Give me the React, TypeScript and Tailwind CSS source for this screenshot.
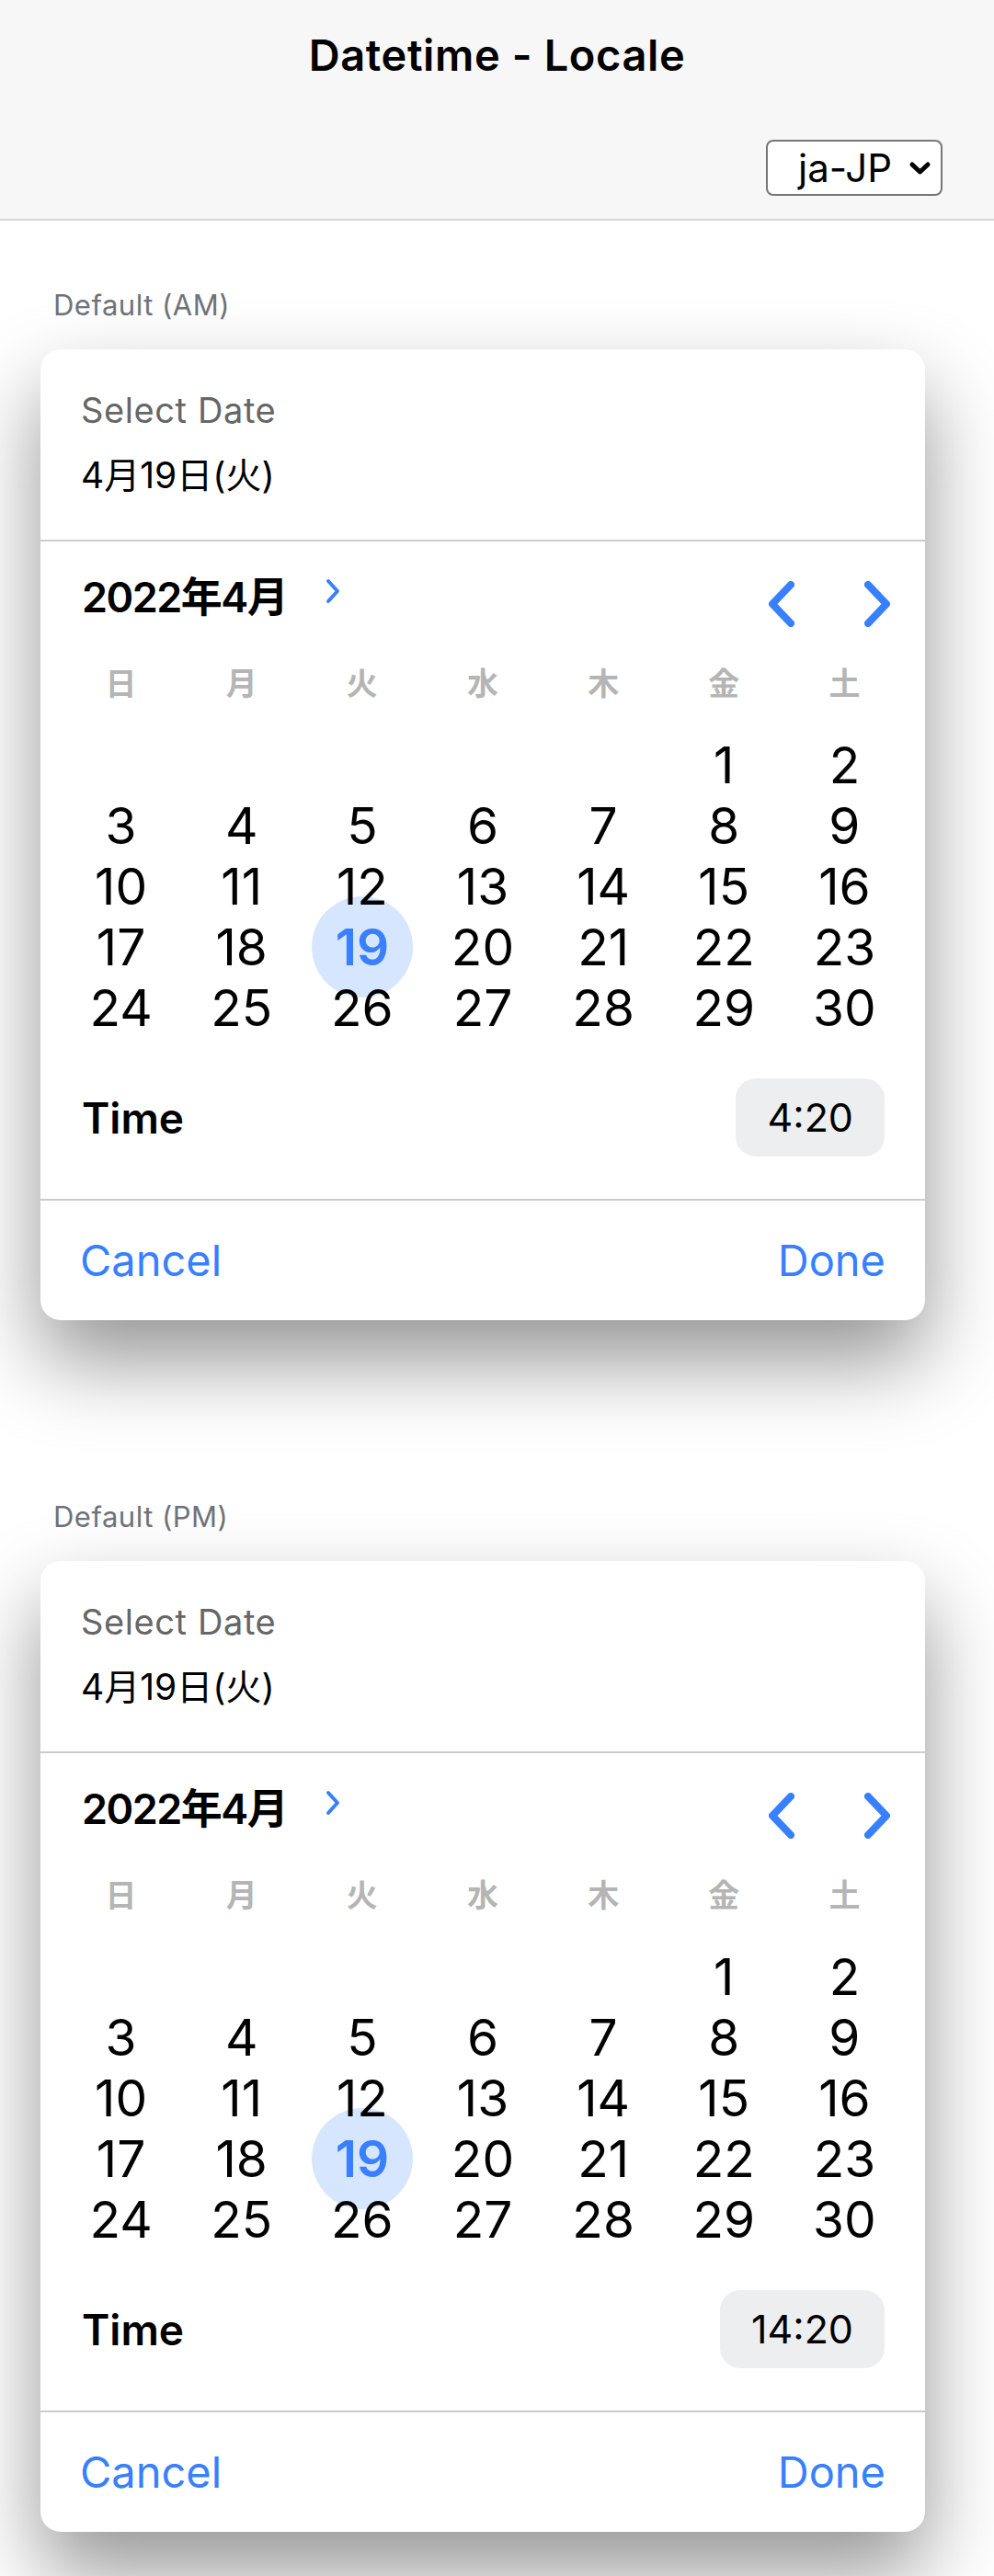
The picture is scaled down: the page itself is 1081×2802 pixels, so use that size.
import React from 'react';

const WEEKDAYS = ['日', '月', '火', '水', '木', '金', '土'];
const DAYS: (number | null)[] = [
  ...Array(5).fill(null),
  ...Array.from({ length: 30 }, (_, i) => i + 1),
];

function Chevron({ dir, className }: { dir: 'left' | 'right'; className?: string }) {
  return (
    <svg width="28" height="50" viewBox="0 0 28 50" className={className}>
      <path
        d={dir === 'left' ? 'M24 4 L4 25 L24 46' : 'M4 4 L24 25 L4 46'}
        fill="none"
        stroke="#3880ff"
        strokeWidth="8"
        strokeLinecap="round"
        strokeLinejoin="round"
      />
    </svg>
  );
}

function DatetimeCard({ time }: { time: string }) {
  return (
    <div className="w-[962px] bg-white rounded-[22px] shadow-[0_44px_90px_rgba(0,0,0,0.42)]">
      {/* selected date header */}
      <div className="pt-[43px] pb-[47px] px-[44px] border-b-2 border-[#cccccc]">
        <div className="text-[38px] leading-[46px] tracking-[0.6px] text-[#666666]">Select Date</div>
        <div className="mt-[25px] text-[39px] leading-[46px] text-black">4月19日(火)</div>
      </div>

      {/* calendar */}
      <div className="pt-[33px] pb-[46px]">
        <div className="flex items-center h-[70px] pl-[45px] pr-[38px]">
          <div className="flex items-center mb-[14px]">
            <span className="text-[45px] leading-[56px] tracking-[-1.5px] font-semibold text-black">2022年4月</span>
            <svg width="16" height="28" viewBox="0 0 16 28" className="ml-[42px] mb-[14px]">
              <path d="M3 3 L13 14 L3 25" fill="none" stroke="#3880ff" strokeWidth="4" strokeLinecap="round" strokeLinejoin="round" />
            </svg>
          </div>
          <div className="ml-auto flex items-center gap-[76px]">
            <Chevron dir="left" />
            <Chevron dir="right" />
          </div>
        </div>

        <div className="mt-[32px] grid grid-cols-7 px-[22px] h-[40px]">
          {WEEKDAYS.map(w => (
            <div key={w} className="flex items-center justify-center text-[34px] leading-[40px] font-semibold text-[#b5b5b5]">
              {w}
            </div>
          ))}
        </div>

        <div className="mt-[35px] grid grid-cols-7 px-[22px]">
          {DAYS.map((d, i) => (
            <div key={i} className="relative h-[66px] flex items-center justify-center">
              {d === 19 && (
                <span className="absolute z-0 left-1/2 top-1/2 -translate-x-1/2 -translate-y-1/2 w-[110px] h-[110px] rounded-full bg-[#d7e6ff]" />
              )}
              {d !== null && (
                <span
                  className={`relative z-10 text-[55px] leading-[66px] ${
                    d === 19 ? 'font-semibold text-[#3880ff]' : 'text-black'
                  }`}
                >
                  {d}
                </span>
              )}
            </div>
          ))}
        </div>

        <div className="mt-[44px] flex items-center justify-between pl-[45px] pr-[44px]">
          <span className="text-[46px] leading-[56px] font-semibold text-black">Time</span>
          <div className="h-[85px] px-[34px] rounded-[22px] bg-[#edeef0] flex items-center text-[43px] text-black">
            {time}
          </div>
        </div>
      </div>

      {/* buttons */}
      <div className="h-[132px] border-t-2 border-[#cccccc] flex items-center justify-between px-[43px] text-[47px] text-[#3880ff]">
        <span>Cancel</span>
        <span>Done</span>
      </div>
    </div>
  );
}

export default function App() {
  return (
    <div className="min-h-[2802px] bg-white font-['Inter','Noto_Sans_CJK_JP',sans-serif]">
      <header className="bg-[#f7f7f7] border-b-2 border-[#d4d4d4]">
        <div className="h-[120px] flex items-center justify-center">
          <h1 className="text-[47px] leading-[56px] tracking-[0.6px] font-semibold text-black">Datetime - Locale</h1>
        </div>
        <div className="flex justify-end pr-[56px] pt-[32px] pb-[25px]">
          <div className="w-[192px] h-[61px] bg-white border-2 border-[#767676] rounded-[8px] flex items-center pl-[33px] pr-[10px]">
            <span className="text-[42px] leading-none text-black">ja-JP</span>
            <svg width="25" height="16" viewBox="0 0 25 16" className="ml-auto">
              <path d="M4 4 L12.5 12 L21 4" fill="none" stroke="#000" strokeWidth="5" strokeLinecap="round" strokeLinejoin="round" />
            </svg>
          </div>
        </div>
      </header>

      <main className="pt-[74px] pl-[44px] flex flex-col gap-[196px]">
        {['Default (AM)', 'Default (PM)'].map((label, i) => (
          <section key={label}>
            <div className="pl-[14px] mb-[30px] text-[31px] leading-[36px] tracking-[0.5px] text-[#6f7277]">{label}</div>
            <DatetimeCard time={i === 0 ? '4:20' : '14:20'} />
          </section>
        ))}
      </main>
    </div>
  );
}
